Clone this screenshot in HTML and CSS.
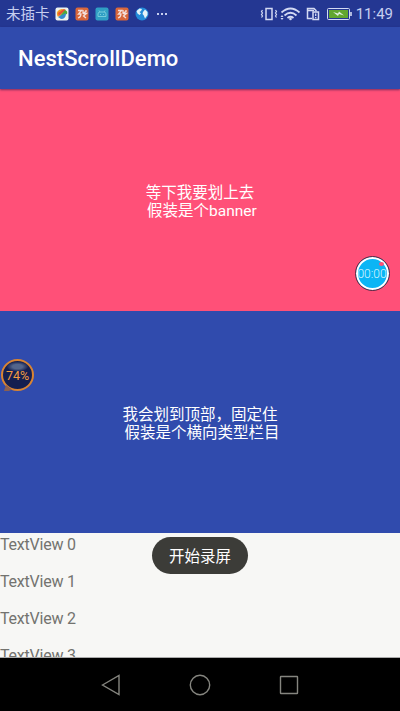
FILE: index.html
```html
<!DOCTYPE html>
<html lang="zh-CN">
<head>
<meta charset="utf-8">
<title>NestScrollDemo</title>
<link rel="stylesheet" href="styles.css">
</head>
<body>
<div class="screen">
  <header class="status">
    <span class="carrier">未插卡</span>
    <div class="notices">
      <svg viewBox="0 0 14 14"><rect x=".5" y=".5" width="13" height="13" rx="2" fill="#eef3ee"/><path d="M2 8Q1 3 7 2l3 1-7 7z" fill="#f29a22"/><path d="M3 6l6-4 2 1-7 6z" fill="#e65332"/><path d="M4 10l6-7q3 1 2 4z" fill="#4faa35"/><path d="M3 10l8-4q0 6-5 6z" fill="#368bce"/></svg>
      <svg viewBox="0 0 14 14"><rect x=".5" y=".5" width="13" height="13" rx="2" fill="#d8673b"/><path d="M3 3.500h3.500L3.500 7H6q0 3-3 4M8 3v3l3-1.500V3M8 6.500h3.500L8.500 9l2.500 2" fill="none" stroke="#f4dfda" stroke-width="1.300"/></svg>
      <svg viewBox="0 0 14 14"><rect x=".5" y=".5" width="13" height="13" rx="2" fill="#309fc4"/><path d="M3 9.5V7q0-2 2-2h4q2 0 2 2v2.5zM4 3.5l1 1.5m5-1.5L9 5M5 7.5h1m2 0h1" fill="none" stroke="#76cbdc"/></svg>
      <svg viewBox="0 0 14 14"><rect x=".5" y=".5" width="13" height="13" rx="2" fill="#d8673b"/><path d="M3 3.500h3.500L3.500 7H6q0 3-3 4M8 3v3l3-1.500V3M8 6.500h3.500L8.500 9l2.500 2" fill="none" stroke="#f4dfda" stroke-width="1.300"/></svg>
      <svg viewBox="0 0 14 14"><circle cx="7" cy="7" r="6.5" fill="#238bd9"/><path d="M1.500 4l3-2.500 2.500.5-1 2-1.500 1 1.500 1.500-1.500 1.500-2-1.500zM8 5l2-2.500 2.500 2.500v3L10 11.500 8.800 8.500 7.500 7z" fill="#e5f2f8"/></svg>
      <svg viewBox="0 0 14 14"><path d="M2 7h2M6 7h2M10 7h2" stroke="#c7cff0" stroke-width="1.8"/></svg>
    </div>
    <svg class="system" viewBox="0 0 94 18" fill="none" stroke="#d3daf3">
      <path d="M6 3.500h6v11H6z" stroke-width="1.500"/><path d="M2.500 5l-1 1.500 1 1.500-1 1.500 1 1.500-1 1.500M15.500 5l1 1.500-1 1.500 1 1.500-1 1.500 1 1.500" stroke-width="1.200"/>
      <path d="M21.500 7.500Q30.500-.5 39.500 7.500M24.500 10.500Q30.500 5 36.500 10.500M27.500 13Q30.500 10.500 33.500 13" stroke-width="1.7"/><circle cx="30.500" cy="14" r="1.300" fill="#d3daf3" stroke="none"/><path d="M20.500 12l1.500-2 1.500 2zM20.500 13l1.500 2 1.500-2z" fill="#d3daf3" stroke="none"/>
      <path d="M52 13.500H47.500V3.500H54l2 2v1M47.500 5.500H54" stroke-width="1.500"/><rect x="53" y="7" width="5.500" height="7.500" stroke-width="1.500"/><path d="M55.700 8.500v2.500m0 1v1.200" stroke-width="1.300"/>
      <rect x="67.500" y="3.500" width="22" height="11" rx="1"/><rect x="69" y="5" width="19" height="8" fill="#62a62f" stroke="none"/><path d="M91 7v4" stroke-width="1.600"/><path d="M73 7l5 1.500 1-2 5 4-5-1.500-1 2z" fill="#e0efdb" stroke="none"/>
    </svg>
    <span class="clock">11:49</span>
  </header>
  <div class="toolbar"><h1>NestScrollDemo</h1></div>
  <section class="panel banner"><p>等下我要划上去
 假装是个banner</p></section>
  <section class="panel category"><p>我会划到顶部，固定住
 假装是个横向类型栏目</p></section>
  <ul class="list">
    <li>TextView 0</li>
    <li>TextView 1</li>
    <li>TextView 2</li>
    <li>TextView 3</li>
  </ul>
  <nav class="navbar">
    <svg viewBox="0 0 22 22"><path d="M2.500 11L19 1.500v19z"/></svg>
    <svg viewBox="0 0 22 22"><circle cx="11" cy="11" r="9.700"/></svg>
    <svg viewBox="0 0 22 22"><rect x="2.500" y="2.500" width="17" height="17" rx=".5"/></svg>
  </nav>
  <div class="recorder">00:00</div>
  <div class="usage">74%</div>
  <div class="toast">开始录屏</div>
</div>
</body>
</html>
```

FILE: styles.css
```css
* {
  box-sizing: border-box;
}

body {
  margin: 0;
  background: #000;
  font-family: Roboto, "Noto Sans CJK SC", sans-serif;
}

.screen {
  position: relative;
  display: flex;
  flex-direction: column;
  height: 711px;
  overflow: hidden;
}

.status {
  display: flex;
  align-items: center;
  flex: 0 0 27px;
  padding: 1px 7px 0 6px;
  background: #243792;
  color: #c7cff0;
}

.carrier {
  width: 49px;
  padding-top: 1px;
  font-size: 14.5px;
  line-height: 20px;
  white-space: nowrap;
}

.notices {
  display: flex;
  gap: 6px;
}

.notices svg {
  width: 14px;
  height: 14px;
}

.system {
  width: 94px;
  height: 18px;
  margin-left: auto;
}

.clock {
  width: 39px;
  font-size: 15px;
  text-align: right;
}

.toolbar {
  position: relative;
  z-index: 1;
  display: flex;
  align-items: center;
  flex: 0 0 62px;
  padding: 2px 18px 0;
  background: #304bad;
  box-shadow: 0 1px 2px rgba(40, 20, 70, .6);
}

.toolbar h1 {
  margin: 0;
  color: #fff;
  font-size: 22px;
  font-weight: 500;
  letter-spacing: .04px;
  line-height: 26px;
}

.panel {
  display: flex;
  align-items: center;
  justify-content: center;
  flex: 0 0 222px;
  padding-top: 3px;
  color: #fff;
}

.panel p {
  margin: 0;
  font-size: 15.5px;
  line-height: 18px;
  text-align: center;
  white-space: break-spaces;
}

.banner {
  background: #ff5078;
}

.category {
  background: #304bad;
}

.list {
  flex: 0 0 125px;
  margin: 0;
  padding: 3px 0 0;
  overflow: hidden;
  border-bottom: 1px solid #aaa;
  background: #f7f7f5;
  color: #73736f;
  font-size: 16px;
  letter-spacing: -.22px;
  line-height: 18px;
  list-style: none;
}

.list li {
  height: 37px;
}

.navbar {
  display: flex;
  flex: 0 0 53px;
  align-items: center;
  justify-content: center;
  gap: 67px;
  background: #000;
}

.navbar svg {
  width: 22px;
  height: 22px;
  fill: none;
  stroke: #85857f;
  stroke-width: 1.4;
}

.recorder {
  position: absolute;
  z-index: 2;
  top: 256px;
  left: 355px;
  width: 35px;
  height: 35px;
  border: 1.5px solid #65243d;
  border-radius: 50%;
  background: #0bb5f5;
  box-shadow: inset 0 0 0 2px #fff;
  color: #d9f5ff;
  font-size: 12px;
  font-weight: 300;
  line-height: 34px;
  text-align: center;
  text-indent: -1px;
}

.recorder::after {
  position: absolute;
  top: 5px;
  right: 5px;
  width: 5px;
  height: 4px;
  border-radius: 50%;
  background: #ff5078;
  content: "";
}

.usage {
  position: absolute;
  z-index: 2;
  top: 359px;
  left: 1px;
  width: 33px;
  height: 32px;
  border: 2px solid #d98432;
  border-radius: 50%;
  background: radial-gradient(ellipse 11px 5px at 50% 20%, #53658b 0 45%, transparent 100%), #141f50;
  color: #f29c40;
  font-size: 12.5px;
  line-height: 29px;
  text-align: center;
}

.usage::before {
  position: absolute;
  bottom: -2px;
  left: 1px;
  width: 8px;
  height: 6px;
  background: #8c6050;
  clip-path: polygon(25% 0, 100% 75%, 60% 100%, 0 100%);
  content: "";
}

.toast {
  position: absolute;
  z-index: 2;
  top: 537px;
  left: 152px;
  width: 96px;
  height: 37px;
  border-radius: 19px;
  background: #3c3c38;
  color: #fff;
  font-size: 15.5px;
  line-height: 40px;
  text-align: center;
}
```
